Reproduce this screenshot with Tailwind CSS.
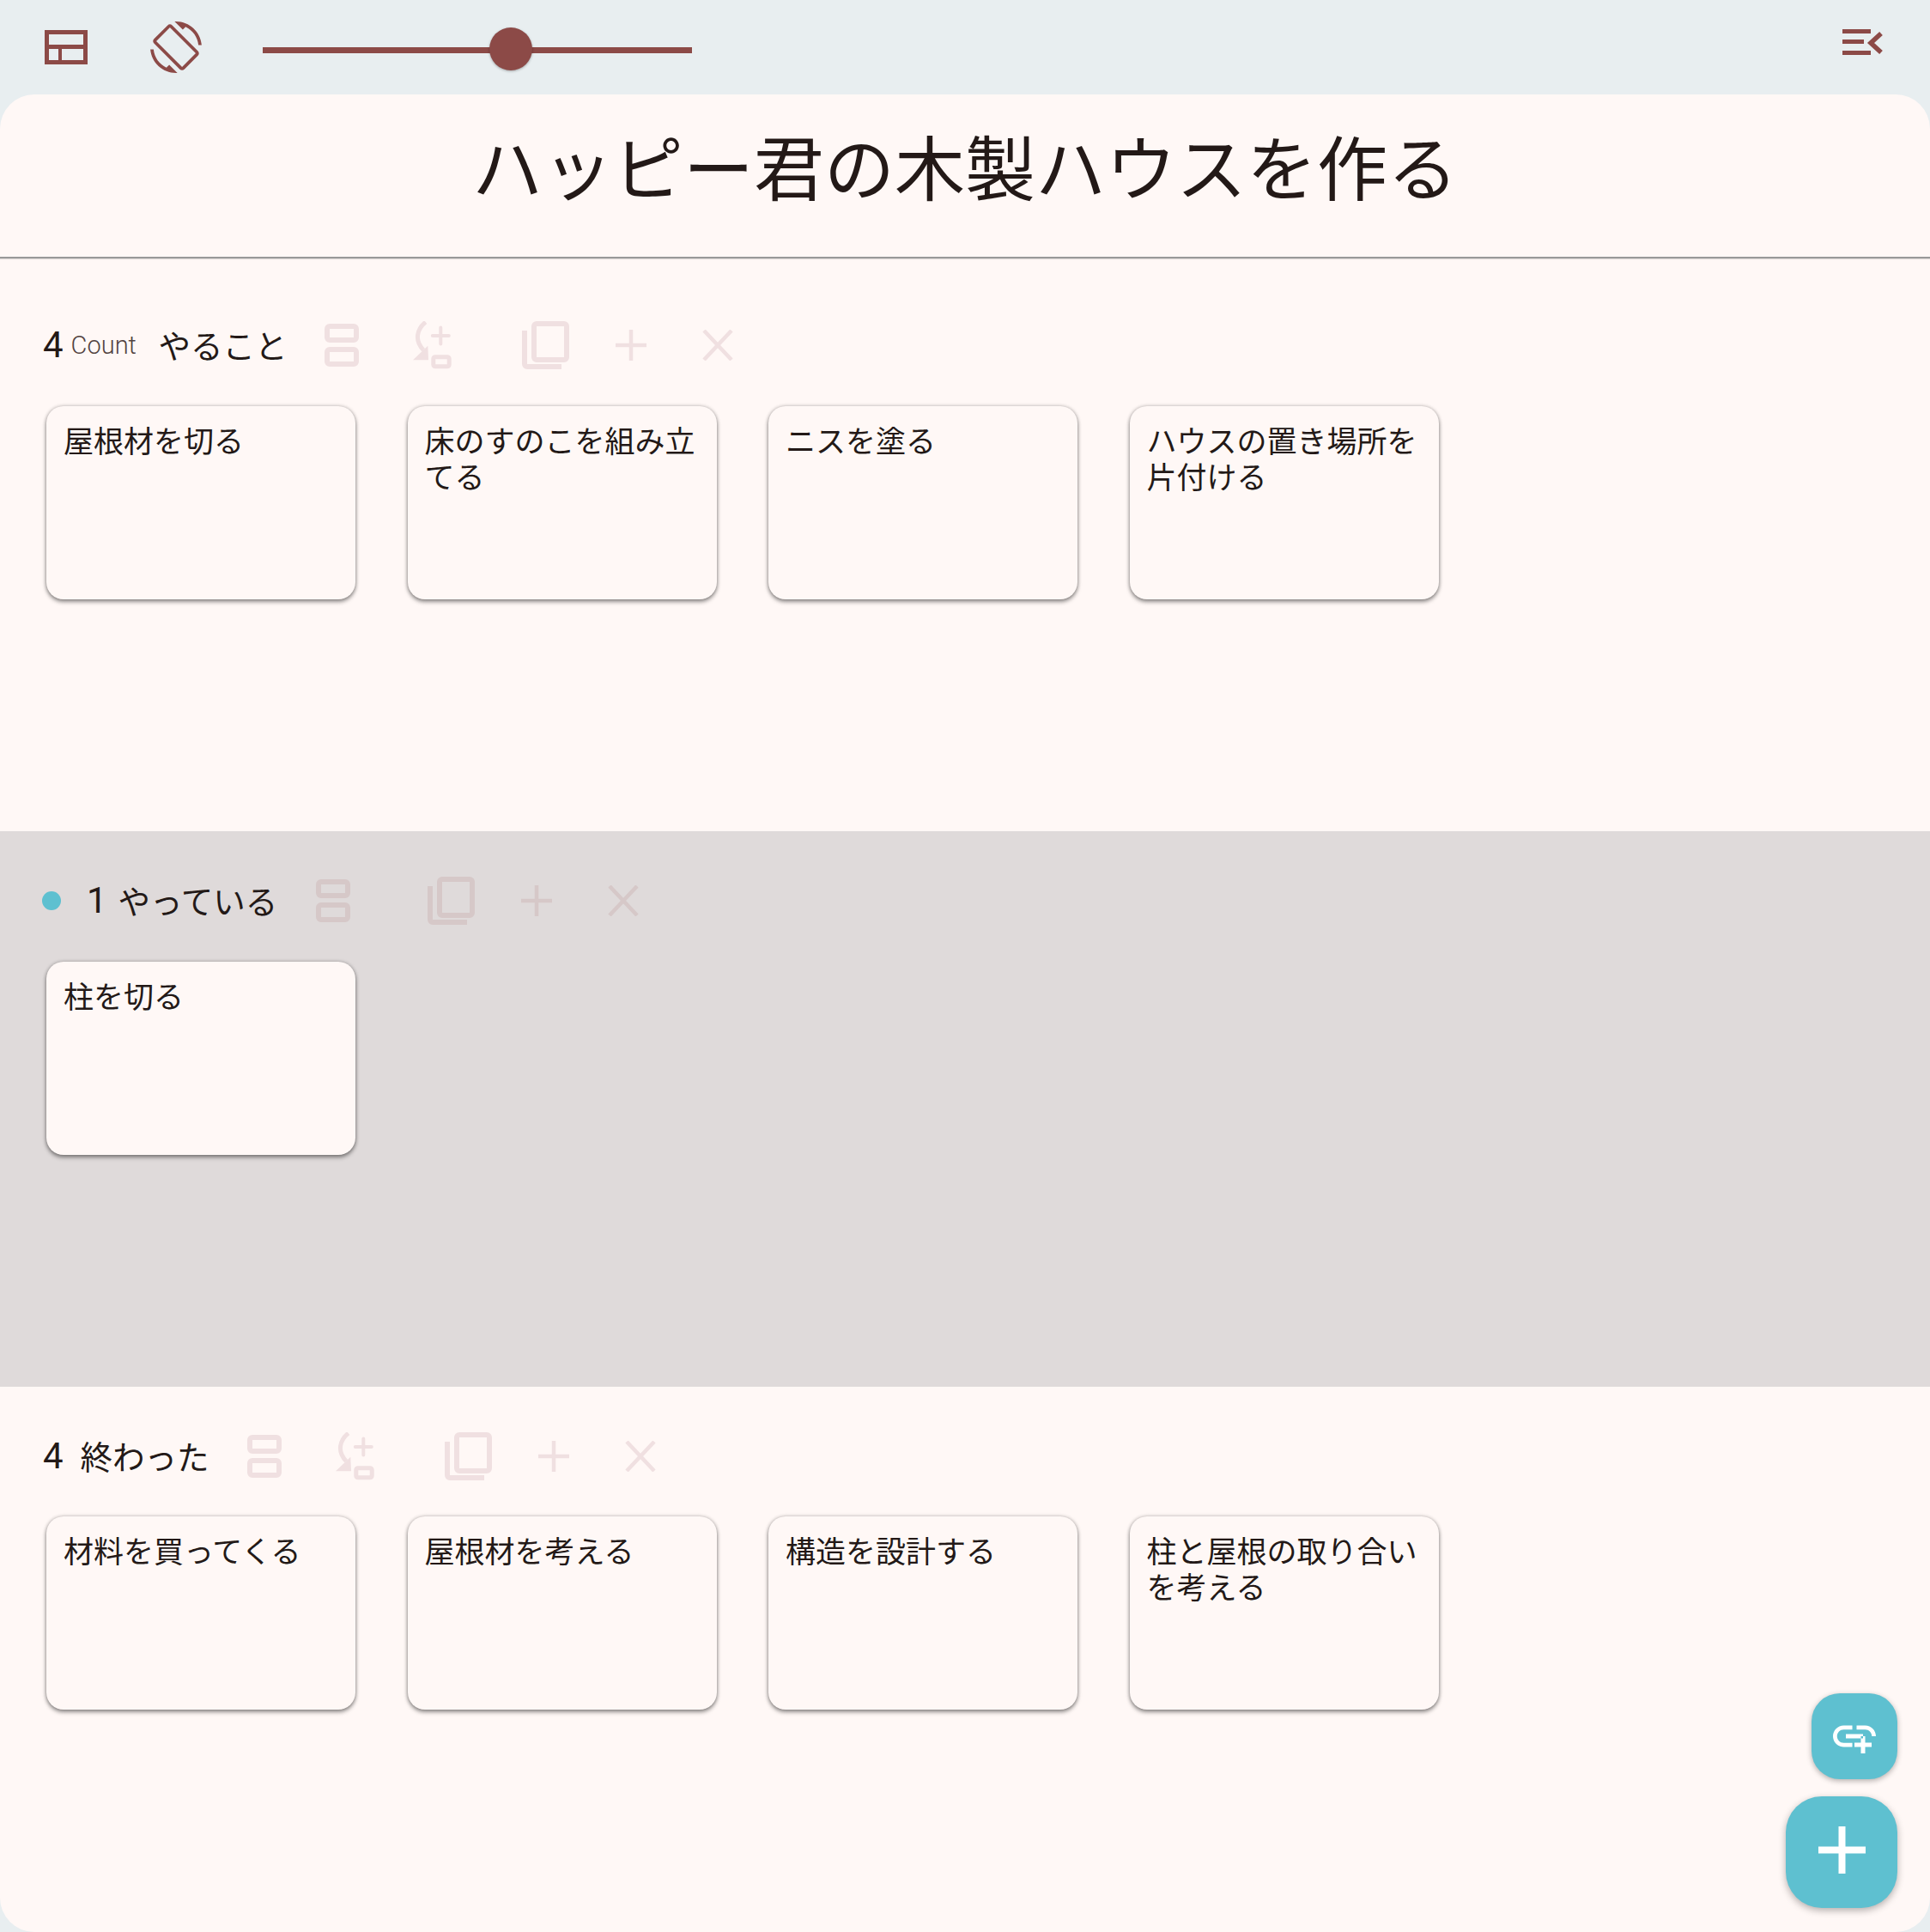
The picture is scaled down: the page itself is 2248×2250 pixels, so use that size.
<!DOCTYPE html>
<html lang="ja">
<head>
<meta charset="UTF-8">
<title>board</title>
<script src="https://cdn.jsdelivr.net/npm/@tailwindcss/browser@4"></script>
</head>
<body class="bg-[#e8eef0] font-['Roboto','Noto_Sans_CJK_JP',sans-serif] text-[#231917]">
<div class="relative w-[2248px] h-[2250px] overflow-hidden">

  <!-- top bar -->
  <div class="h-[110px] flex items-start text-[#8c4a47]">
    <svg class="mt-[35px] ml-[52px] w-[50px] h-[40px]" viewBox="0 0 50 40" fill="currentColor"><path fill-rule="evenodd" d="M0 0h50v40H0zM5 5v12h40V5zM5 22v13h11V22zM20 22v13h25V22z"/></svg>
    <svg class="mt-[25px] ml-[73px] w-[60px] h-[60px]" viewBox="0 0 24 24" fill="currentColor"><path d="M16.48 2.52c3.27 1.55 5.61 4.72 5.97 8.48h1.5C23.44 4.84 18.29 0 12 0l-.66.03 3.81 3.81 1.33-1.32zm-6.25-.77c-.59-.59-1.54-.59-2.12 0L1.75 8.11c-.59.59-.59 1.54 0 2.12l12.02 12.02c.59.59 1.54.59 2.12 0l6.36-6.36c.59-.59.59-1.54 0-2.12L10.23 1.75zm4.6 19.44L2.81 9.17l6.36-6.36 12.02 12.02-6.36 6.36zm-7.31.29C4.25 19.94 1.91 16.76 1.55 13H.05C.56 19.16 5.71 24 12 24l.66-.03-3.81-3.81-1.33 1.32z"/></svg>
    <!-- slider -->
    <div class="relative mt-[55px] ml-[71px] w-[500px] h-[7px] bg-[#8c4a47]">
      <div class="absolute left-[264px] top-[-23px] w-[50px] h-[50px] rounded-full bg-[#8c4a47] shadow-[0_1px_3px_rgba(0,0,0,0.3)]"></div>
    </div>
    <svg class="mt-[30px] ml-auto mr-[55px] w-[47px] h-[38px]" viewBox="0 0 47 38" fill="none" stroke="currentColor" stroke-width="5"><path d="M0 6.5h33M0 18.5h25M0 31.5h33"/><path d="M45 9 33 20l12 11" stroke-width="5.5"/></svg>
  </div>

  <!-- panel -->
  <div class="h-[2140px] bg-[#fff8f6] rounded-[40px] overflow-hidden flex flex-col">
    <div class="h-[191px] shrink-0 border-b-2 border-[#999999] shadow-[0_1px_1px_rgba(0,0,0,0.12)] flex justify-center items-center pb-[26px]">
      <h1 class="text-[82px] leading-none font-normal font-['Noto_Sans_CJK_JP',sans-serif]">ハッピー君の木製ハウスを作る</h1>
    </div>

    <!-- やること -->
    <section class="h-[667px] shrink-0 pt-[71px] pl-[50px]">
      <div class="h-[60px] flex items-center">
        <span class="text-[42px] leading-none font-normal">4</span>
        <span class="ml-[9px] text-[29px] leading-none font-light text-[#534341]">Count</span>
        <span class="ml-[25.5px] pb-[3px] text-[37.5px] leading-none font-['Noto_Sans_CJK_JP',sans-serif]">やること</span>
        <svg class="ml-[44px] w-[40px] h-[50px] text-[#f0e0e1]" viewBox="0 0 40 50" fill="none" stroke="currentColor" stroke-width="6"><rect x="3" y="3" width="34" height="16" rx="3"/><rect x="3" y="30" width="34" height="17" rx="3"/></svg>
        <svg class="ml-[62px] w-[47px] h-[56px] text-[#f0e0e1]" viewBox="0 0 47 56"><path d="M15.7 1C6 9 2 22 13.3 33.7" fill="none" stroke="currentColor" stroke-width="5"/><path d="M1 45.3h18l-.7-16.6z" fill="currentColor"/><path d="M33.3 7.5v19M23.8 17h19" fill="none" stroke="currentColor" stroke-width="4" stroke-linecap="round"/><rect x="24.8" y="41.8" width="18.4" height="11" rx="2" fill="none" stroke="currentColor" stroke-width="5"/></svg>
        <svg class="ml-[81px] w-[55px] h-[56px] text-[#f0e0e1]" viewBox="0 0 55 56" fill="none" stroke="currentColor" stroke-width="6"><rect x="14" y="3" width="38" height="42" rx="3"/><path d="M3 11v39a3 3 0 0 0 3 3h40"/></svg>
        <svg class="ml-[54px] w-[36px] h-[36px] text-[#f0e0e1]" viewBox="0 0 36 36" fill="none" stroke="currentColor" stroke-width="4.5"><path d="M18 0v36M0 18h36"/></svg>
        <svg class="ml-[65px] w-[36px] h-[36px] text-[#f0e0e1]" viewBox="0 0 36 36" fill="none" stroke="currentColor" stroke-width="4.5"><path d="m2 1 32 34M34 1 2 35"/></svg>
      </div>
      <div class="mt-[41px] ml-[4px] flex gap-[60.5px] text-[35px] leading-[42px] font-['Noto_Sans_CJK_JP',sans-serif]">
        <div class="w-[360px] h-[225px] rounded-[20px] bg-[#fff8f6] pt-[18px] px-[20px] shadow-[0_3px_5px_rgba(0,0,0,0.4),0_0_4px_rgba(0,0,0,0.25)]">屋根材を切る</div>
        <div class="w-[360px] h-[225px] rounded-[20px] bg-[#fff8f6] pt-[18px] px-[20px] shadow-[0_3px_5px_rgba(0,0,0,0.4),0_0_4px_rgba(0,0,0,0.25)]">床のすのこを組み立てる</div>
        <div class="w-[360px] h-[225px] rounded-[20px] bg-[#fff8f6] pt-[18px] px-[20px] shadow-[0_3px_5px_rgba(0,0,0,0.4),0_0_4px_rgba(0,0,0,0.25)]">ニスを塗る</div>
        <div class="w-[360px] h-[225px] rounded-[20px] bg-[#fff8f6] pt-[18px] px-[20px] shadow-[0_3px_5px_rgba(0,0,0,0.4),0_0_4px_rgba(0,0,0,0.25)]">ハウスの置き場所を片付ける</div>
      </div>
    </section>

    <!-- やっている -->
    <section class="h-[647px] shrink-0 pt-[51px] pl-[49px] bg-[#dfdada]">
      <div class="h-[60px] flex items-center">
        <span class="w-[22px] h-[22px] rounded-full bg-[#5ec0d0]"></span>
        <span class="ml-[30px] text-[42px] leading-none font-normal">1</span>
        <span class="ml-[13px] pb-[3px] text-[37.5px] leading-none font-['Noto_Sans_CJK_JP',sans-serif]">やっている</span>
        <svg class="ml-[45px] w-[40px] h-[50px] text-[#d6c8c8]" viewBox="0 0 40 50" fill="none" stroke="currentColor" stroke-width="6"><rect x="3" y="3" width="34" height="16" rx="3"/><rect x="3" y="30" width="34" height="17" rx="3"/></svg>
        <svg class="ml-[90px] w-[55px] h-[56px] text-[#d6c8c8]" viewBox="0 0 55 56" fill="none" stroke="currentColor" stroke-width="6"><rect x="14" y="3" width="38" height="42" rx="3"/><path d="M3 11v39a3 3 0 0 0 3 3h40"/></svg>
        <svg class="ml-[54px] w-[36px] h-[36px] text-[#d6c8c8]" viewBox="0 0 36 36" fill="none" stroke="currentColor" stroke-width="4.5"><path d="M18 0v36M0 18h36"/></svg>
        <svg class="ml-[65px] w-[36px] h-[36px] text-[#d6c8c8]" viewBox="0 0 36 36" fill="none" stroke="currentColor" stroke-width="4.5"><path d="m2 1 32 34M34 1 2 35"/></svg>
      </div>
      <div class="mt-[41px] ml-[5px] flex gap-[60.5px] text-[35px] leading-[42px] font-['Noto_Sans_CJK_JP',sans-serif]">
        <div class="w-[360px] h-[225px] rounded-[20px] bg-[#fff8f6] pt-[18px] px-[20px] shadow-[0_3px_5px_rgba(0,0,0,0.4),0_0_4px_rgba(0,0,0,0.25)]">柱を切る</div>
      </div>
    </section>

    <!-- 終わった -->
    <section class="flex-1 pt-[51px] pl-[50px]">
      <div class="h-[60px] flex items-center">
        <span class="text-[42px] leading-none font-normal">4</span>
        <span class="ml-[20px] pb-[3px] text-[37.5px] leading-none font-['Noto_Sans_CJK_JP',sans-serif]">終わった</span>
        <svg class="ml-[44.5px] w-[40px] h-[50px] text-[#f0e0e1]" viewBox="0 0 40 50" fill="none" stroke="currentColor" stroke-width="6"><rect x="3" y="3" width="34" height="16" rx="3"/><rect x="3" y="30" width="34" height="17" rx="3"/></svg>
        <svg class="ml-[62px] w-[47px] h-[56px] text-[#f0e0e1]" viewBox="0 0 47 56"><path d="M15.7 1C6 9 2 22 13.3 33.7" fill="none" stroke="currentColor" stroke-width="5"/><path d="M1 45.3h18l-.7-16.6z" fill="currentColor"/><path d="M33.3 7.5v19M23.8 17h19" fill="none" stroke="currentColor" stroke-width="4" stroke-linecap="round"/><rect x="24.8" y="41.8" width="18.4" height="11" rx="2" fill="none" stroke="currentColor" stroke-width="5"/></svg>
        <svg class="ml-[81px] w-[55px] h-[56px] text-[#f0e0e1]" viewBox="0 0 55 56" fill="none" stroke="currentColor" stroke-width="6"><rect x="14" y="3" width="38" height="42" rx="3"/><path d="M3 11v39a3 3 0 0 0 3 3h40"/></svg>
        <svg class="ml-[54px] w-[36px] h-[36px] text-[#f0e0e1]" viewBox="0 0 36 36" fill="none" stroke="currentColor" stroke-width="4.5"><path d="M18 0v36M0 18h36"/></svg>
        <svg class="ml-[65px] w-[36px] h-[36px] text-[#f0e0e1]" viewBox="0 0 36 36" fill="none" stroke="currentColor" stroke-width="4.5"><path d="m2 1 32 34M34 1 2 35"/></svg>
      </div>
      <div class="mt-[40px] ml-[4px] flex gap-[60.5px] text-[35px] leading-[42px] font-['Noto_Sans_CJK_JP',sans-serif]">
        <div class="w-[360px] h-[225px] rounded-[20px] bg-[#fff8f6] pt-[18px] px-[20px] shadow-[0_3px_5px_rgba(0,0,0,0.4),0_0_4px_rgba(0,0,0,0.25)]">材料を買ってくる</div>
        <div class="w-[360px] h-[225px] rounded-[20px] bg-[#fff8f6] pt-[18px] px-[20px] shadow-[0_3px_5px_rgba(0,0,0,0.4),0_0_4px_rgba(0,0,0,0.25)]">屋根材を考える</div>
        <div class="w-[360px] h-[225px] rounded-[20px] bg-[#fff8f6] pt-[18px] px-[20px] shadow-[0_3px_5px_rgba(0,0,0,0.4),0_0_4px_rgba(0,0,0,0.25)]">構造を設計する</div>
        <div class="w-[360px] h-[225px] rounded-[20px] bg-[#fff8f6] pt-[18px] px-[20px] shadow-[0_3px_5px_rgba(0,0,0,0.4),0_0_4px_rgba(0,0,0,0.25)]">柱と屋根の取り合いを考える</div>
      </div>
    </section>
  </div>

  <!-- floating buttons -->
  <div class="absolute left-[2110px] top-[1972px] w-[100px] h-[100px] rounded-[33px] bg-[#5ec0d0] flex items-center justify-center shadow-[0_2px_6px_rgba(0,0,0,0.3)]">
    <svg class="w-[60px] h-[60px]" viewBox="0 0 24 24" fill="#fff"><path d="M8 11h8v2H8zm12.1 1H22c0-2.76-2.24-5-5-5h-4v1.9h4c1.71 0 3.1 1.39 3.1 3.1zM3.9 12c0-1.71 1.39-3.1 3.1-3.1h4V7H7c-2.76 0-5 2.24-5 5s2.24 5 5 5h4v-1.9H7c-1.71 0-3.1-1.39-3.1-3.1zM17 12h-2v3h-3v2h3v3h2v-3h3v-2h-3z"/></svg>
  </div>
  <div class="absolute left-[2080px] top-[2092px] w-[130px] h-[130px] rounded-[42px] bg-[#5ec0d0] flex items-center justify-center pb-[5px] shadow-[0_3px_8px_rgba(0,0,0,0.3)]">
    <svg class="w-[55px] h-[55px]" viewBox="0 0 55 55" fill="none" stroke="#fff" stroke-width="8"><path d="M27.5 0v55M0 27.5h55"/></svg>
  </div>
</div>
</body>
</html>
